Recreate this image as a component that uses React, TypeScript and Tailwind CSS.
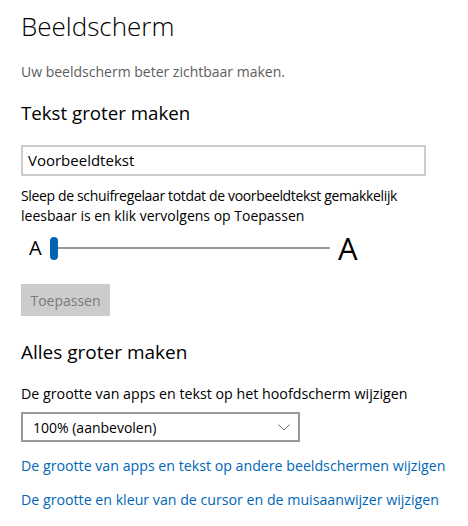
export default function App() {
  return (
    <div className="w-[468px] h-[526px] bg-white overflow-hidden pl-[21px] text-black font-['Open_Sans',sans-serif]">
      <div className="pt-[10px] h-[50px] text-[26px] leading-[32px] font-light whitespace-nowrap">Beeldscherm</div>
      <div className="mt-[12px] h-[20px] text-[14px] leading-[20px] text-[#5d5d5d] whitespace-nowrap">Uw beeldscherm beter zichtbaar maken.</div>
      <div className="mt-[17px] h-[28px] text-[18.7px] leading-[28px] whitespace-nowrap">Tekst groter maken</div>
      <div className="mt-[18px] w-[405px] h-[31px] border-2 border-[#cccccc] flex items-center pl-[5px] text-[15px] whitespace-nowrap">Voorbeeldtekst</div>
      <div className="mt-[10px] text-[14px] leading-[20px] whitespace-nowrap">
        <span className="tracking-[-0.35px]">Sleep de schuifregelaar totdat de voorbeeldtekst gemakkelijk</span>
        <br />
        leesbaar is en klik vervolgens op Toepassen
      </div>
      <div className="mt-[10px] h-[24px] flex items-center">
        <span className="ml-[8px] w-[12px] text-[20px] leading-[24px]">A</span>
        <div className="ml-[9px] w-[8px] h-[23px] rounded-full bg-[#0063b1]" />
        <div className="w-[272px] h-[2px] bg-[#999999]" />
        <span className="ml-[8px] text-[31px] leading-[24px]">A</span>
      </div>
      <div className="mt-[24px] w-[89px] h-[32px] bg-[#cccccc] text-[#7a7a7a] text-[14px] flex items-center justify-center">Toepassen</div>
      <div className="mt-[22px] h-[28px] text-[19px] leading-[28px] whitespace-nowrap">Alles groter maken</div>
      <div className="mt-[18px] h-[20px] text-[14.25px] leading-[20px] whitespace-nowrap">De grootte van apps en tekst op het hoofdscherm wijzigen</div>
      <div className="mt-[8px] w-[279px] h-[30px] border-2 border-[#999999] flex items-center justify-between pl-[10px] pr-[8px] text-[14px]">
        <span>100% (aanbevolen)</span>
        <svg width="12" height="7" viewBox="0 0 12 7" fill="none">
          <path d="M0.5 0.5 L6 6 L11.5 0.5" stroke="#666" strokeWidth="1" />
        </svg>
      </div>
      <div className="mt-[14px] h-[20px] text-[14.2px] leading-[20px] text-[#0067b8] whitespace-nowrap">De grootte van apps en tekst op andere beeldschermen wijzigen</div>
      <div className="mt-[14px] h-[20px] text-[14.2px] leading-[20px] text-[#0067b8] whitespace-nowrap">De grootte en kleur van de cursor en de muisaanwijzer wijzigen</div>
    </div>
  );
}
